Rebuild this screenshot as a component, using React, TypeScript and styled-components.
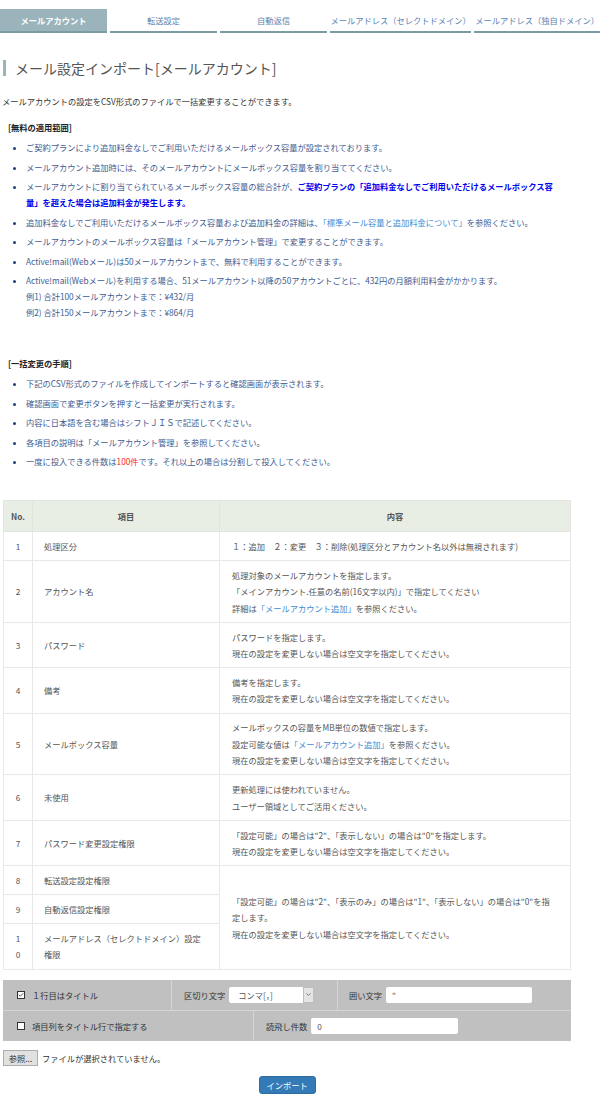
import React from "react";
import styled, { createGlobalStyle } from "styled-components";
import { Check, ChevronDown } from "lucide-react";

const GlobalStyle = createGlobalStyle`
  body {
    margin: 0;
    background: #fff;
    font-family: "Noto Sans CJK JP", sans-serif;
    font-size: 8.25px;
    color: #333;
  }
`;

const tabs = [
  "メールアカウント",
  "転送設定",
  "自動返信",
  "メールアドレス（セレクトドメイン）",
  "メールアドレス（独自ドメイン）",
];

type Row = {
  no: React.ReactNode;
  name: string;
  content?: React.ReactNode;
  span?: number;
};

const keepNote = "現在の設定を変更しない場合は空文字を指定してください。";

const buildRows = (): Row[] => [
  {
    no: "1",
    name: "処理区分",
    content: "１：追加　２：変更　３：削除(処理区分とアカウント名以外は無視されます)",
  },
  {
    no: "2",
    name: "アカウント名",
    content: (
      <>
        処理対象のメールアカウントを指定します。
        <br />
        「メインアカウント.任意の名前(16文字以内)」で指定してください
        <br />
        詳細は<Link>「メールアカウント追加」</Link>を参照ください。
      </>
    ),
  },
  {
    no: "3",
    name: "パスワード",
    content: (
      <>
        パスワードを指定します。
        <br />
        {keepNote}
      </>
    ),
  },
  {
    no: "4",
    name: "備考",
    content: (
      <>
        備考を指定します。
        <br />
        {keepNote}
      </>
    ),
  },
  {
    no: "5",
    name: "メールボックス容量",
    content: (
      <>
        メールボックスの容量をMB単位の数値で指定します。
        <br />
        設定可能な値は<Link>「メールアカウント追加」</Link>を参照ください。
        <br />
        {keepNote}
      </>
    ),
  },
  {
    no: "6",
    name: "未使用",
    content: (
      <>
        更新処理には使われていません。
        <br />
        ユーザー領域としてご活用ください。
      </>
    ),
  },
  {
    no: "7",
    name: "パスワード変更設定権限",
    content: (
      <>
        「設定可能」の場合は"2"、「表示しない」の場合は"0"を指定します。
        <br />
        {keepNote}
      </>
    ),
  },
  {
    no: "8",
    name: "転送設定設定権限",
    span: 3,
    content: (
      <>
        「設定可能」の場合は"2"、「表示のみ」の場合は"1"、「表示しない」の場合は"0"を指定します。
        <br />
        {keepNote}
      </>
    ),
  },
  { no: "9", name: "自動返信設定権限" },
  {
    no: (
      <>
        1
        <br />0
      </>
    ),
    name: "メールアドレス（セレクトドメイン）設定権限",
  },
];

const App = () => {
  const rows = buildRows();

  return (
    <>
      <GlobalStyle />
      <TabBar>
        {tabs.map((t, i) => (
          <Tab key={t} $active={i === 0}>
            {t}
          </Tab>
        ))}
      </TabBar>

      <Main>
        <Title>メール設定インポート[メールアカウント]</Title>
        <Intro>メールアカウントの設定をCSV形式のファイルで一括変更することができます。</Intro>

        <SectionHead>[無料の適用範囲]</SectionHead>
        <Bullets>
          <li>ご契約プランにより追加料金なしでご利用いただけるメールボックス容量が設定されております。</li>
          <li>メールアカウント追加時には、そのメールアカウントにメールボックス容量を割り当ててください。</li>
          <li>
            メールアカウントに割り当てられているメールボックス容量の総合計が、
            <Strong>ご契約プランの「追加料金なしでご利用いただけるメールボックス容量」を超えた場合は追加料金が発生します。</Strong>
          </li>
          <li>
            追加料金なしでご利用いただけるメールボックス容量および追加料金の詳細は、
            <Link>「標準メール容量と追加料金について」</Link>を参照ください。
          </li>
          <li>メールアカウントのメールボックス容量は「メールアカウント管理」で変更することができます。</li>
          <li>Active!mail(Webメール)は50メールアカウントまで、無料で利用することができます。</li>
          <li>
            Active!mail(Webメール)を利用する場合、51メールアカウント以降の50アカウントごとに、432円の月額利用料金がかかります。
            <br />
            例1) 合計100メールアカウントまで：¥432/月
            <br />
            例2) 合計150メールアカウントまで：¥864/月
          </li>
        </Bullets>

        <SectionHead $gap={35}>[一括変更の手順]</SectionHead>
        <Bullets>
          <li>下記のCSV形式のファイルを作成してインポートすると確認画面が表示されます。</li>
          <li>確認画面で変更ボタンを押すと一括変更が実行されます。</li>
          <li>内容に日本語を含む場合はシフトＪＩＳで記述してください。</li>
          <li>各項目の説明は「メールアカウント管理」を参照してください。</li>
          <li>
            一度に投入できる件数は<Red>100件</Red>です。それ以上の場合は分割して投入してください。
          </li>
        </Bullets>

        <Table>
          <colgroup>
            <col style={{ width: 29 }} />
            <col style={{ width: 187 }} />
            <col />
          </colgroup>
          <thead>
            <tr>
              <Th>No.</Th>
              <Th>項目</Th>
              <Th>内容</Th>
            </tr>
          </thead>
          <tbody>
            {rows.map((r) => (
              <tr key={r.name}>
                <NoCell>{r.no}</NoCell>
                <NameCell>{r.name}</NameCell>
                {r.content !== undefined && <TextCell rowSpan={r.span}>{r.content}</TextCell>}
              </tr>
            ))}
          </tbody>
        </Table>

        <OptionPanel>
          <OptionRow>
            <OptionCell $width={169} $pad={14}>
              <CheckBox>
                <Check size={6} strokeWidth={3} />
              </CheckBox>
              １行目はタイトル
            </OptionCell>
            <OptionCell $width={166}>
              区切り文字
              <SelectWrap>
                <Select defaultValue="comma">
                  <option value="comma">コンマ[，]</option>
                </Select>
                <SelectArrow>
                  <ChevronDown size={7} strokeWidth={2.5} />
                </SelectArrow>
              </SelectWrap>
            </OptionCell>
            <OptionCell $pad={11}>
              囲い文字
              <TextInput defaultValue={'"'} $width={146} />
            </OptionCell>
          </OptionRow>
          <OptionRow>
            <OptionCell $width={251} $pad={14}>
              <CheckBox />
              項目列をタイトル行で指定する
            </OptionCell>
            <OptionCell>
              読飛し件数
              <TextInput defaultValue="0" $width={147} />
            </OptionCell>
          </OptionRow>
        </OptionPanel>

        <FileRow>
          <BrowseButton>参照...</BrowseButton>
          ファイルが選択されていません。
        </FileRow>

        <Actions>
          <ImportButton>インポート</ImportButton>
        </Actions>
      </Main>
    </>
  );
};

export default App;

const TabBar = styled.div`
  display: grid;
  grid-template-columns: 107px 107px 107px 141px 1fr;
  column-gap: 3px;
  margin-top: 9px;
`;

const Tab = styled.div<{ $active?: boolean }>`
  height: 22px;
  display: flex;
  align-items: center;
  justify-content: center;
  white-space: nowrap;
  border-bottom: 2px solid #7b9ba5;
  background: ${(p) => (p.$active ? "#9bb4bc" : "transparent")};
  color: ${(p) => (p.$active ? "#fff" : "#5b83b3")};
  font-weight: ${(p) => (p.$active ? 700 : 400)};
`;

const Main = styled.div`
  width: 568px;
  margin-left: 3px;
  padding-bottom: 10px;
`;

const Title = styled.h1`
  margin: 27px 0 0;
  padding-left: 9px;
  border-left: 3px solid #9bb4bc;
  font-size: 14px;
  font-weight: 400;
  line-height: 16px;
  color: #555;
`;

const Intro = styled.p`
  margin: 17px 0 0 -1px;
  line-height: 16px;
  color: #333;
`;

const SectionHead = styled.p<{ $gap?: number }>`
  margin: ${(p) => p.$gap ?? 10}px 0 0 5px;
  line-height: 16px;
  font-weight: 700;
  color: #222;
`;

const Bullets = styled.ul`
  margin: 4px 0 0;
  padding: 0 14px 0 23px;
  color: #3f5b8f;

  li {
    line-height: 16px;
    margin-bottom: 3.5px;
  }

  li::marker {
    color: #1f3d7c;
  }
`;

const Strong = styled.strong`
  color: #0000ee;
  font-weight: 700;
`;

const Link = styled.a`
  color: #3f8ad3;
  text-decoration: none;
  cursor: pointer;
`;

const Red = styled.span`
  color: #ff1a1a;
`;

const Table = styled.table`
  width: 568px;
  margin-top: 31px;
  border-collapse: collapse;
  table-layout: fixed;
  color: #555;
`;

const Th = styled.th`
  height: 30px;
  padding: 0;
  background: #e9eee5;
  border: 1px solid #e3e6e0;
  font-weight: 700;
  color: #555;
`;

const Td = styled.td`
  border: 1px solid #e8e8e8;
  padding: 5.8px 0;
  line-height: 16.4px;
  vertical-align: middle;
`;

const NoCell = styled(Td)`
  text-align: center;
`;

const NameCell = styled(Td)`
  padding-left: 11px;
  padding-right: 14px;
`;

const TextCell = styled(Td)`
  padding-left: 12px;
  padding-right: 18px;
`;

const OptionPanel = styled.div`
  margin-top: 10px;
  background: #c0c0c0;
  color: #333;
`;

const OptionRow = styled.div`
  display: flex;
  height: 30px;

  & + & {
    border-top: 1px solid #d6d6d6;
  }
`;

const OptionCell = styled.div<{ $width?: number; $pad?: number }>`
  display: flex;
  align-items: center;
  gap: 4px;
  box-sizing: border-box;
  width: ${(p) => (p.$width ? `${p.$width}px` : "auto")};
  flex: ${(p) => (p.$width ? "none" : "1")};
  padding-left: ${(p) => p.$pad ?? 12}px;
  border-right: 1px solid #d6d6d6;

  &:last-child {
    border-right: none;
  }
`;

const CheckBox = styled.span`
  width: 6px;
  height: 6px;
  margin-right: 3px;
  display: inline-flex;
  align-items: center;
  justify-content: center;
  flex: none;
  background: #fff;
  border: 1px solid #333;
  color: #222;
`;

const SelectWrap = styled.div`
  display: flex;
  height: 16px;
`;

const Select = styled.select`
  appearance: none;
  width: 74px;
  height: 16px;
  padding: 0 0 0 9px;
  border: none;
  border-radius: 2px 0 0 2px;
  background: #fff;
  font: inherit;
  color: #555;
`;

const SelectArrow = styled.span`
  width: 11px;
  box-sizing: border-box;
  display: flex;
  align-items: center;
  justify-content: center;
  background: #e4e4e4;
  border: 1px solid #bdbdbd;
  color: #555;
`;

const TextInput = styled.input<{ $width: number }>`
  width: ${(p) => p.$width}px;
  height: 16px;
  box-sizing: border-box;
  padding: 0 6px;
  border: none;
  border-radius: 2px;
  background: #fff;
  font: inherit;
  color: #555;
`;

const FileRow = styled.div`
  display: flex;
  align-items: center;
  gap: 4px;
  margin-top: 9px;
  color: #333;
`;

const BrowseButton = styled.button`
  width: 35px;
  height: 16px;
  padding: 0;
  background: #e1e1e1;
  border: 1px solid #adadad;
  font: inherit;
  color: #333;
`;

const Actions = styled.div`
  display: flex;
  justify-content: center;
  margin-top: 10px;
`;

const ImportButton = styled.button`
  width: 57px;
  height: 18px;
  padding: 0;
  background: #337ab7;
  border: 1px solid #2e6da4;
  border-radius: 3px;
  font: inherit;
  color: #fff;
`;
